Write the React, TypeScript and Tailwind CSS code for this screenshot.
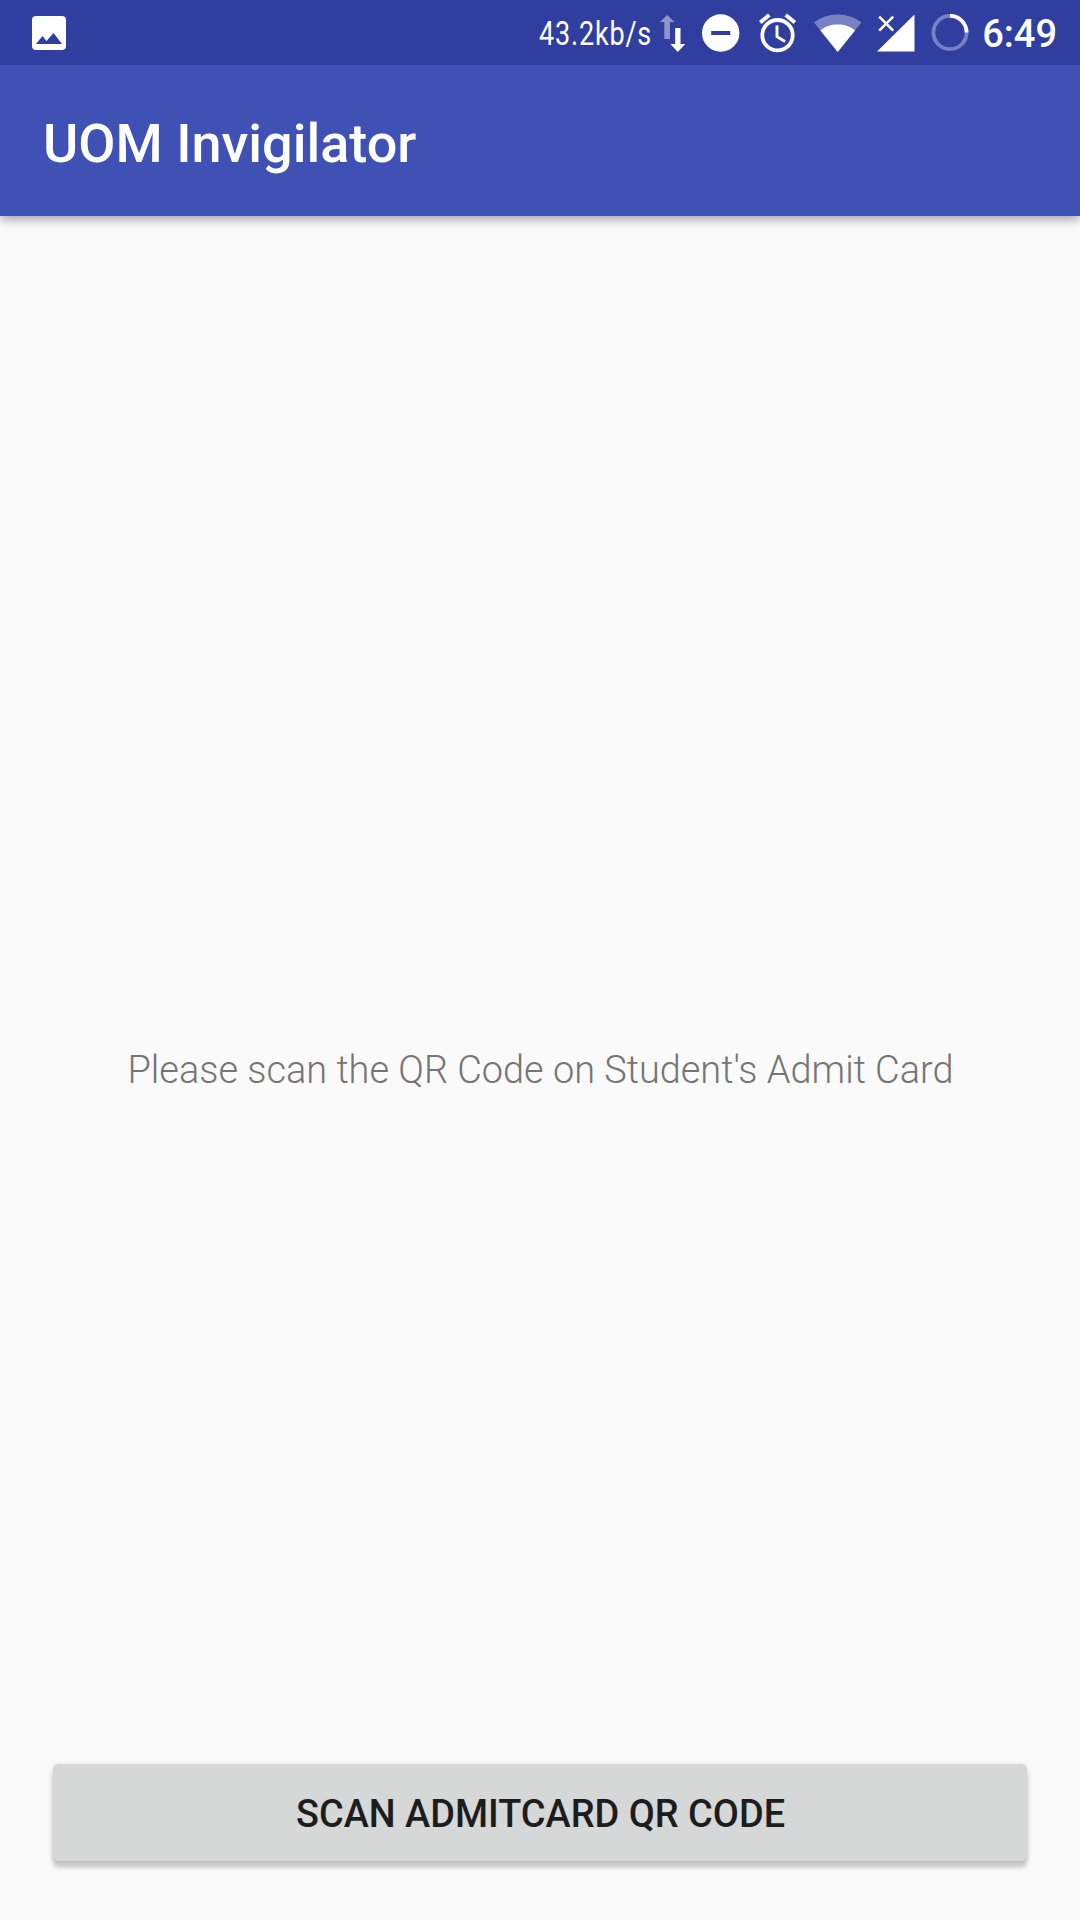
import type { ReactNode } from "react";

function StatusIcon({
  label,
  viewBox,
  className,
  children,
}: {
  label: string;
  viewBox: string;
  className: string;
  children: ReactNode;
}) {
  return (
    <svg
      role="img"
      aria-label={label}
      viewBox={viewBox}
      className={`shrink-0 ${className}`}
      fill="currentColor"
    >
      {children}
    </svg>
  );
}

function StatusBar() {
  return (
    <div className="relative z-10 flex h-[65px] shrink-0 items-center bg-[#303f9f] pl-8 pr-[23px] text-white">
      <StatusIcon label="Picture" viewBox="0 0 34 34" className="h-[34px] w-[34px] mt-px">
        <rect width="34" height="34" rx="4" />
        <path d="M4 28 10.5 20 14.5 25 21.5 17 30 28z" fill="#303f9f" />
      </StatusIcon>

      <div className="ml-auto flex items-center">
        <span className="w-[112px] shrink-0 whitespace-nowrap pt-[3px]">
          <span className="inline-block origin-left -translate-x-px scale-x-[0.83] text-[32.5px] leading-[62px] tracking-[1px]">
            43.2kb/s
          </span>
        </span>

        <StatusIcon label="Network speed" viewBox="0 0 26 38" className="ml-2 h-[38px] w-[26px] mt-[3px]">
          <path d="M7.2 0 14.5 7H10v17H4.300V7H0z" opacity=".45" />
          <path d="M15.200 13h5.300v16h4.800l-7.500 8-7.400-8h4.800z" />
        </StatusIcon>

        <StatusIcon label="Do not disturb" viewBox="0 0 38 38" className="ml-4 h-[38px] w-[38px]">
          <circle cx="18.700" cy="19" r="18.700" />
          <path d="M9.200 17h19v4h-19z" fill="#303f9f" />
        </StatusIcon>

        <StatusIcon label="Alarm" viewBox="0 0 38 40" className="ml-[19px] h-10 w-[38px]">
          <g fill="none" stroke="currentColor">
            <circle cx="18.500" cy="22.200" r="15.200" strokeWidth="3.800" />
            <path d="M18 12.500v11.300l8 4.800" strokeWidth="2.900" />
            <path d="M1.200 9.500 10.300 2M26.700 2l9.200 7.500" strokeWidth="4" />
          </g>
        </StatusIcon>

        <StatusIcon label="Wi-Fi" viewBox="0 0 48 38" className="ml-[17px] h-[38px] w-12">
          <path d="M0 8.500C6.500 3.300 15 .5 23.700.5s17.200 2.800 23.700 8L23.700 38z" opacity=".35" />
          <path d="M6.400 16.500C11.200 12.400 16.700 10.500 23.700 10.500s12.500 1.900 17.300 6L23.700 38z" />
        </StatusIcon>

        <StatusIcon label="No signal" viewBox="0 0 38 38" className="ml-[15px] h-[38px] w-[38px]">
          <path d="M37.500.500v37H0z" />
          <path d="m2.200 2.700 14 14M16.200 2.700l-14 14" stroke="currentColor" strokeWidth="2.500" />
        </StatusIcon>

        <StatusIcon label="Battery" viewBox="0 0 38 38" className="ml-4 h-[38px] w-[38px]">
          <g fill="none" stroke="currentColor" strokeWidth="3.800">
            <circle cx="19" cy="18.500" r="16.600" opacity=".35" />
            <path d="M19 1.900a16.600 16.600 0 0 1 16.600 16.600" />
          </g>
        </StatusIcon>

        <span className="ml-[13px] pt-[3px] text-[38px] font-medium leading-[62px]">6:49</span>
      </div>
    </div>
  );
}

export default function App() {
  return (
    <div className="flex h-[1920px] w-[1080px] flex-col overflow-hidden bg-[#fafafa] font-['Roboto',sans-serif]">
      <StatusBar />

      <header className="flex h-[151px] shrink-0 items-center bg-[#3f51b5] pl-[43px] pt-[6px] shadow-[0_3px_10px_rgba(0,0,0,0.38)]">
        <h1 className="text-[54px] font-medium leading-none text-white">UOM Invigilator</h1>
      </header>

      <main className="flex flex-1 flex-col px-[53px] pb-[59px]">
        <p className="mt-[832px] whitespace-nowrap pl-px text-center text-[37.9px] font-light leading-[44px] text-[#757575]">
          Please scan the QR Code on Student's Admit Card
        </p>
        <button
          type="button"
          className="mt-auto h-[97px] w-full rounded-[5px] bg-[#d6d7d7] pl-px pt-[4px] text-[37.9px] font-medium uppercase text-[#1d1d1d] shadow-[0_7px_4px_rgba(0,0,0,0.18),0_1px_5px_rgba(0,0,0,0.12)]"
        >
          Scan Admitcard QR Code
        </button>
      </main>
    </div>
  );
}
